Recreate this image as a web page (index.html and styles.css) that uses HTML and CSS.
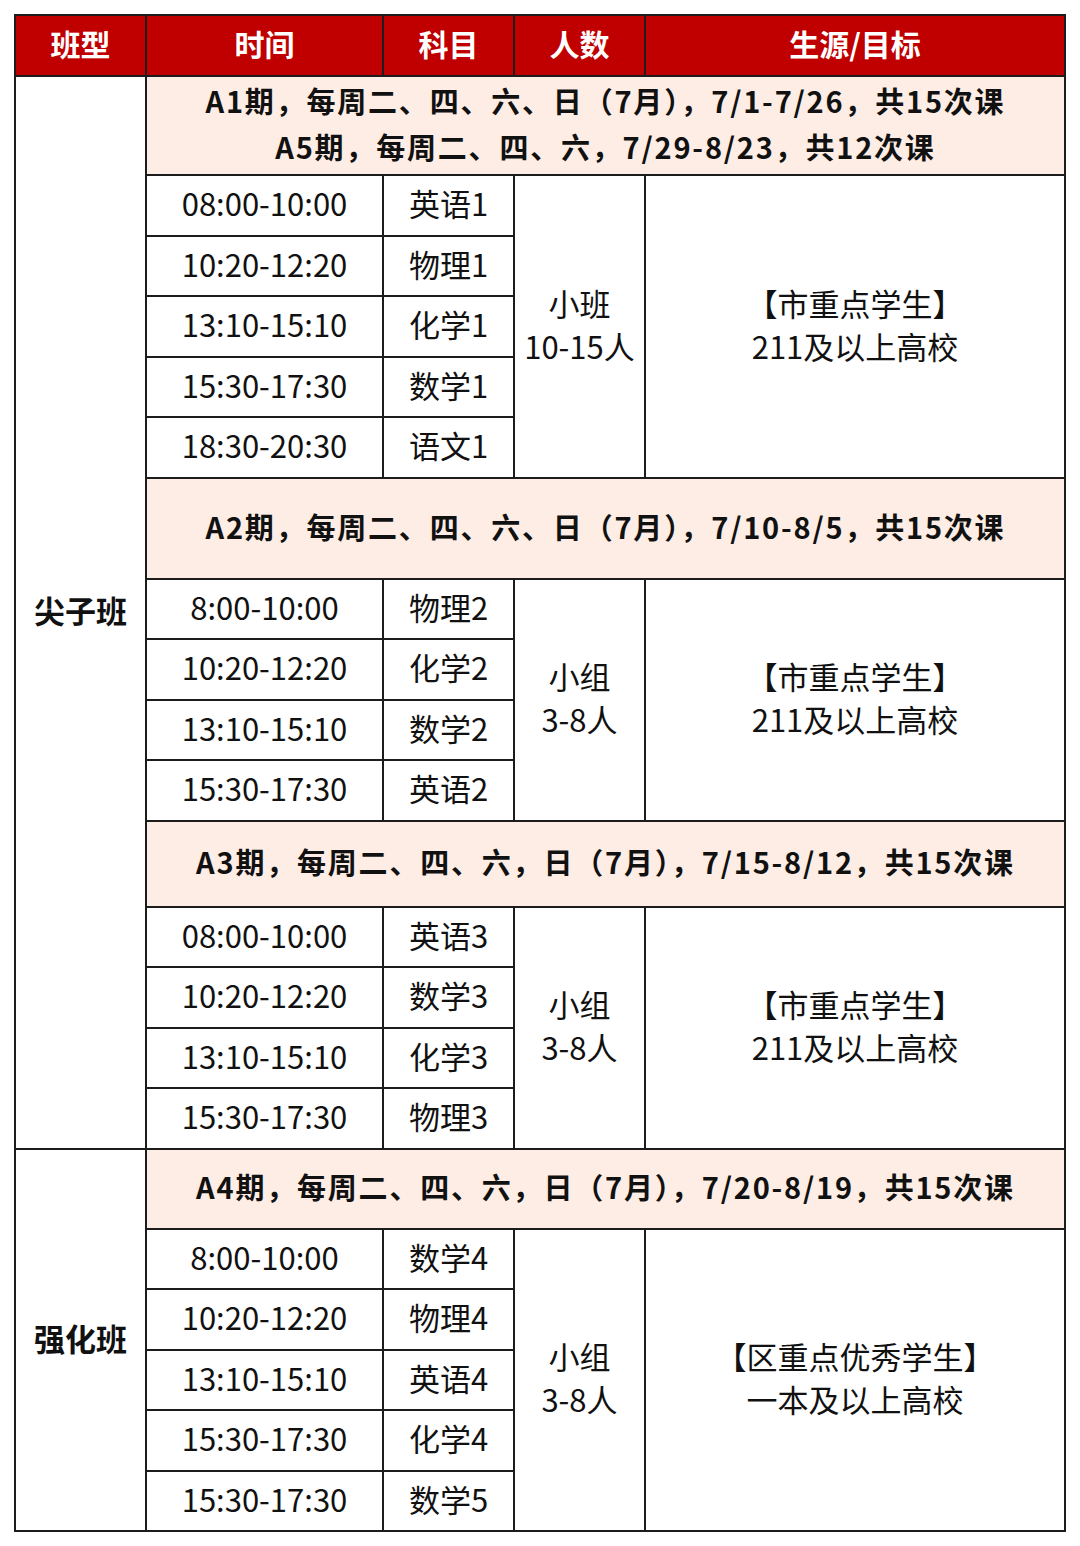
FILE: index.html
```html
<!DOCTYPE html>
<html lang="zh">
<head>
<meta charset="utf-8">
<link rel="stylesheet" href="styles.css">
</head>
<body>
<table class="sched">
  <colgroup>
    <col class="c-type"><col class="c-time"><col class="c-subj"><col class="c-num"><col class="c-goal">
  </colgroup>
  <thead>
    <tr class="head">
      <th>班型</th><th>时间</th><th>科目</th><th>人数</th><th>生源/目标</th>
    </tr>
  </thead>
  <tbody>
    <tr class="band b1">
      <td class="type" rowspan="16">尖子班</td>
      <td colspan="4">A1期，每周二、四、六、日（7月），7/1-7/26，共15次课<br>A5期，每周二、四、六，7/29-8/23，共12次课</td>
    </tr>
    <tr class="row"><td>08:00-10:00</td><td>英语1</td><td class="num" rowspan="5">小班<br>10-15人</td><td class="goal" rowspan="5">【市重点学生】<br>211及以上高校</td></tr>
    <tr class="row"><td>10:20-12:20</td><td>物理1</td></tr>
    <tr class="row"><td>13:10-15:10</td><td>化学1</td></tr>
    <tr class="row"><td>15:30-17:30</td><td>数学1</td></tr>
    <tr class="row"><td>18:30-20:30</td><td>语文1</td></tr>

    <tr class="band b2"><td colspan="4">A2期，每周二、四、六、日（7月），7/10-8/5，共15次课</td></tr>
    <tr class="row"><td>8:00-10:00</td><td>物理2</td><td class="num" rowspan="4">小组<br>3-8人</td><td class="goal" rowspan="4">【市重点学生】<br>211及以上高校</td></tr>
    <tr class="row"><td>10:20-12:20</td><td>化学2</td></tr>
    <tr class="row"><td>13:10-15:10</td><td>数学2</td></tr>
    <tr class="row"><td>15:30-17:30</td><td>英语2</td></tr>

    <tr class="band b3"><td colspan="4">A3期，每周二、四、六，日（7月），7/15-8/12，共15次课</td></tr>
    <tr class="row"><td>08:00-10:00</td><td>英语3</td><td class="num" rowspan="4">小组<br>3-8人</td><td class="goal" rowspan="4">【市重点学生】<br>211及以上高校</td></tr>
    <tr class="row"><td>10:20-12:20</td><td>数学3</td></tr>
    <tr class="row"><td>13:10-15:10</td><td>化学3</td></tr>
    <tr class="row"><td>15:30-17:30</td><td>物理3</td></tr>

    <tr class="band b4">
      <td class="type" rowspan="6">强化班</td>
      <td colspan="4">A4期，每周二、四、六，日（7月），7/20-8/19，共15次课</td>
    </tr>
    <tr class="row"><td>8:00-10:00</td><td>数学4</td><td class="num" rowspan="5">小组<br>3-8人</td><td class="goal" rowspan="5">【区重点优秀学生】<br>一本及以上高校</td></tr>
    <tr class="row"><td>10:20-12:20</td><td>物理4</td></tr>
    <tr class="row"><td>13:10-15:10</td><td>英语4</td></tr>
    <tr class="row"><td>15:30-17:30</td><td>化学4</td></tr>
    <tr class="row"><td>15:30-17:30</td><td>数学5</td></tr>
  </tbody>
</table>
</body>
</html>
```

FILE: styles.css
```css
html, body {
  margin: 0;
  padding: 0;
  background: #ffffff;
}
body {
  padding: 14px 14px 0 14px;
  font-family: "Microsoft YaHei", "Noto Sans CJK SC", "Noto Sans", sans-serif;
  color: #111;
}
.sched {
  border-collapse: collapse;
  table-layout: fixed;
  width: 1050px;
}
.c-type { width: 131px; }
.c-time { width: 237px; }
.c-subj { width: 131px; }
.c-num  { width: 131px; }
.c-goal { width: 420px; }

.sched th,
.sched td {
  border: 2px solid #1c1c1c;
  padding: 0 0 5px 0;
  text-align: center;
  vertical-align: middle;
}
.head th {
  background: #c00000;
  color: #ffffff;
  font-weight: 700;
  font-size: 30px;
  height: 54px;
  line-height: 1;
}
.band td {
  background: #fdede5;
  font-weight: 700;
  font-size: 29px;
  letter-spacing: 1.8px;
  line-height: 46px;
  color: #111;
  white-space: nowrap;
}
.band td.type {
  background: #ffffff;
  font-size: 31px;
  letter-spacing: 0;
  line-height: 1;
}
.b1 { height: 99px; }
.b2 { height: 101px; }
.b3 { height: 86px; }
.b4 { height: 80px; }
.row { height: 60.5px; }
.row td {
  font-size: 31px;
  line-height: 1;
  font-weight: 400;
}
.row td.num,
.row td.goal {
  line-height: 43px;
}
```
